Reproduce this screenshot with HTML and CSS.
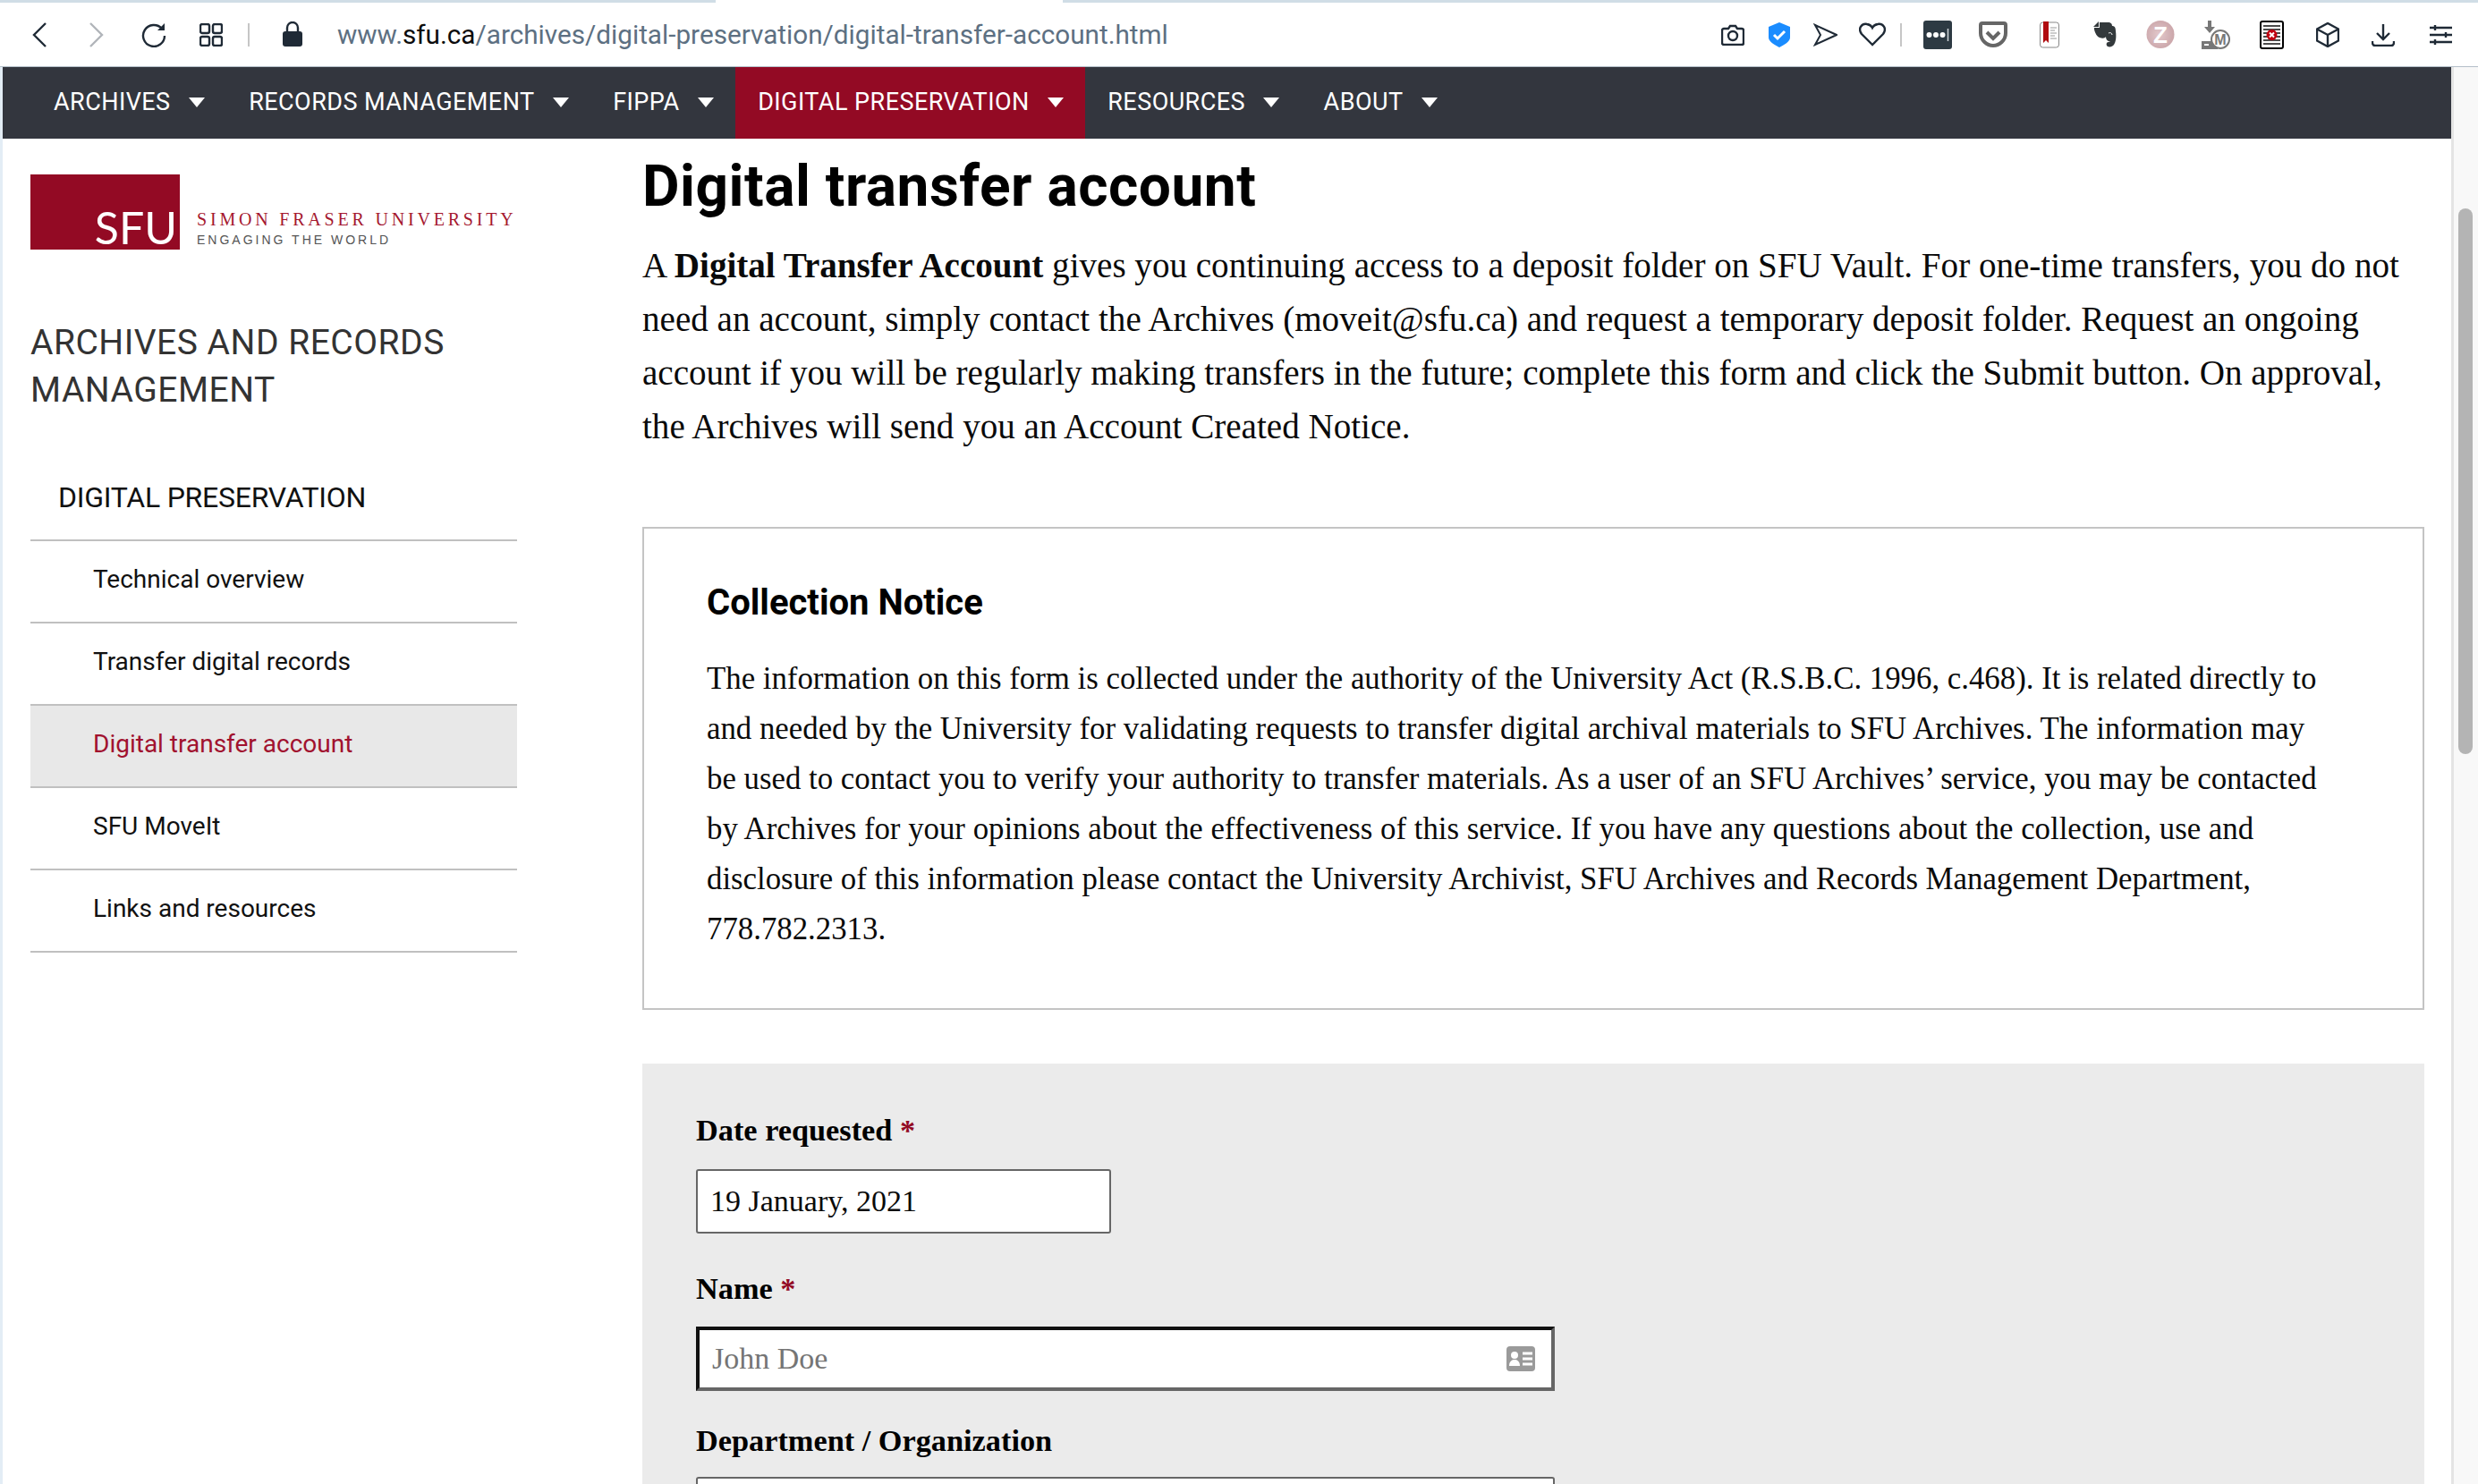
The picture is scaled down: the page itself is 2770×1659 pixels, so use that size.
FILE: index.html
```html
<!DOCTYPE html>
<html lang="en">
<head>
<meta charset="utf-8">
<title>Digital transfer account</title>
<link rel="stylesheet" href="styles.css">
</head>
<body>
<div class="window">
  <div class="tabstrip"><span class="tab-edge tab-edge-left"></span><span class="tab-active"></span><span class="tab-edge"></span></div>
  <header class="toolbar">
    <div class="tool-group tool-group-nav">
      <span class="cell cell-nav"><svg width="18" height="30" viewBox="0 0 18 30"><path d="M16 2 3 15l13 13" class="ln"/></svg></span>
      <span class="cell cell-nav"><svg width="18" height="30" viewBox="0 0 18 30"><path d="M2 2l13 13L2 28" class="ln ln-off"/></svg></span>
      <span class="cell cell-nav"><svg width="28" height="28" viewBox="0 0 28 28"><path d="M23 7A12 12 0 1 0 26 15" class="ln"/><path d="M18 9h8V1z" class="fill"/></svg></span>
      <span class="cell cell-nav"><svg width="26" height="26" viewBox="0 0 26 26"><rect x="1" y="1" width="10" height="10" rx="2" class="ln"/><rect x="15" y="1" width="10" height="10" rx="2" class="ln"/><rect x="1" y="15" width="10" height="10" rx="2" class="ln"/><rect x="15" y="15" width="10" height="10" rx="2" class="ln"/></svg></span>
    </div>
    <span class="tool-sep tool-sep-left"></span>
    <span class="lock"><svg width="22" height="28" viewBox="0 0 22 28"><path d="M5 12V7a6 6 0 0 1 12 0v5" class="ln"/><rect y="11" width="22" height="17" rx="3" class="fill"/></svg></span>
    <div class="url"><span class="url-host">www.<b class="url-domain">sfu.ca</b></span>/archives/digital-preservation/digital-transfer-account.html</div>
    <div class="tool-group">
      <span class="cell"><svg width="26" height="24" viewBox="0 0 26 24"><path d="M3 5h5l2-3h6l2 3h5a2 2 0 0 1 2 2v14a2 2 0 0 1-2 2H3a2 2 0 0 1-2-2V7a2 2 0 0 1 2-2z" class="ln"/><circle cx="13" cy="13" r="5" class="ln"/></svg></span>
      <span class="cell"><svg width="24" height="28" viewBox="0 0 24 28"><path d="M12 0 24 5v12c0 4-6 8-12 11C6 25 0 21 0 17V5z" fill="#1a8cff"/><path d="M6 14l4 4 8-8" fill="none" stroke="#fff" stroke-width="3"/></svg></span>
      <span class="cell"><svg width="27" height="26" viewBox="0 0 27 26"><path d="M2 2l24 11L2 24l6-11z" class="ln ln-thin"/></svg></span>
      <span class="cell"><svg width="30" height="27" viewBox="0 0 30 27"><path d="M15 25 3 13C-2 6 4 1 9 2c3 .5 5 2 6 4 1-2 3-3.500 6-4 5-1 11 4 6 11z" class="ln"/></svg></span>
    </div>
    <span class="tool-sep"></span>
    <div class="tool-group tool-group-ext">
      <span class="cell cell-ext"><svg width="32" height="32" viewBox="0 0 32 32"><rect width="32" height="32" rx="3" fill="#2d3a43"/><circle cx="6.500" cy="16" r="3" fill="#fff"/><circle cx="14" cy="16" r="3" fill="#fff"/><circle cx="21.500" cy="16" r="3" fill="#fff"/><path d="M27.500 9v14" stroke="#cfd4d8" stroke-width="1.500"/></svg></span>
      <span class="cell cell-ext"><svg width="32" height="29" viewBox="0 0 32 29"><path d="M4 2h24a2 2 0 0 1 2 2v9c0 8-7 14-14 14S2 21 2 13V4a2 2 0 0 1 2-2z" fill="none" stroke="#666" stroke-width="4"/><path d="M9 12l7 7 7-7" fill="none" stroke="#666" stroke-width="4"/></svg></span>
      <span class="cell cell-ext"><svg width="22" height="30" viewBox="0 0 22 30"><rect x=".5" y="1" width="21" height="28" rx="3" fill="#fff" stroke="#888"/><path d="M12 7h7M12 10h5M12 13h7M12 16h5M12 19h7" stroke="#999"/><path d="M4 0h6v24l-3-3-3 3z" fill="#b00c10"/></svg></span>
      <span class="cell cell-ext"><svg width="26" height="30" viewBox="0 0 26 30"><path d="M7 1h9c4 0 5 2 5 4 3 0 4 2 4 6 1 7 0 12-2 15-2 3-7 3-8 1-1-2 0-4 2-4h2c-2-1-5-2-5-6-1 2-4 2-7 1-3-1-5-5-6-9V7h6z" fill="#33393c"/><path d="M0 6l6-6v6z" fill="#33393c"/><path d="M17 13c2-1 4 0 4 2" fill="none" stroke="#fff"/></svg></span>
      <span class="cell cell-ext"><svg width="32" height="31" viewBox="0 0 32 31"><defs><radialGradient id="zball" cx=".45" cy=".5" r=".6"><stop offset="0" stop-color="#e2c8cb"/><stop offset="1" stop-color="#c9a3a7"/></radialGradient></defs><circle cx="16" cy="15.500" r="15.500" fill="url(#zball)"/><text x="16" y="25" class="ext-z">Z</text></svg></span>
      <span class="cell cell-ext"><svg width="32" height="32" viewBox="0 0 32 32"><path d="M7 0h4v7h4l-6 7-6-7h4z" fill="#777"/><path d="M0 23h18v9H0z" fill="#777"/><path d="M3 27h5" stroke="#fff" stroke-width="2"/><circle cx="21" cy="21" r="10" fill="#fff" stroke="#777" stroke-width="2"/><text x="21" y="27" class="ext-m">M</text></svg></span>
      <span class="cell cell-ext"><svg width="27" height="32" viewBox="0 0 27 32"><rect x="1" y="1" width="25" height="30" rx="2" fill="#fff" stroke="#000" stroke-width="2"/><path d="M4 6h19M4 10h19M4 14h19M4 18h19M4 22h19M4 26h19" stroke="#111" stroke-width="1.500"/><circle cx="13.500" cy="16" r="6" fill="#c00010"/><path d="M11 13.500l5 5M16 13.500l-5 5" stroke="#fff" stroke-width="2"/></svg></span>
      <span class="cell cell-ext"><svg width="26" height="28" viewBox="0 0 26 28"><path d="M13 1l12 6.500v13L13 27 1 20.500v-13zM1 7.500 13 14l12-6.500M13 14v13" class="ln"/></svg></span>
      <span class="cell cell-ext"><svg width="26" height="26" viewBox="0 0 26 26"><path d="M13 1v17M6 11l7 7 7-7M1 20v2a3 3 0 0 0 3 3h18a3 3 0 0 0 3-3v-2" class="ln"/></svg></span>
      <span class="cell cell-last"><svg width="25" height="22" viewBox="0 0 25 22"><path d="M0 3h25M0 11h25M0 19h25M6 0v6M18 8v6M6 16v6" class="ln"/></svg></span>
    </div>
  </header>
  <div class="viewport">
    <div class="page">
      <nav class="mainnav">
        <a class="navitem">ARCHIVES<i class="caret"></i></a>
        <a class="navitem">RECORDS MANAGEMENT<i class="caret"></i></a>
        <a class="navitem">FIPPA<i class="caret"></i></a>
        <a class="navitem navitem-active">DIGITAL PRESERVATION<i class="caret"></i></a>
        <a class="navitem">RESOURCES<i class="caret"></i></a>
        <a class="navitem">ABOUT<i class="caret"></i></a>
      </nav>
      <div class="content">
        <aside class="sidebar">
          <div class="logo">
            <div class="logo-mark">SFU</div>
            <div class="logo-text">
              <div class="logo-name">SIMON FRASER UNIVERSITY</div>
              <div class="logo-tag">ENGAGING THE WORLD</div>
            </div>
          </div>
          <h2 class="site-title">ARCHIVES AND RECORDS MANAGEMENT</h2>
          <h3 class="section-title">DIGITAL PRESERVATION</h3>
          <ul class="sidemenu">
            <li class="sideitem">Technical overview</li>
            <li class="sideitem">Transfer digital records</li>
            <li class="sideitem sideitem-active">Digital transfer account</li>
            <li class="sideitem">SFU MoveIt</li>
            <li class="sideitem">Links and resources</li>
          </ul>
        </aside>
        <main class="main">
          <h1 class="title">Digital transfer account</h1>
          <p class="intro">A <strong>Digital Transfer Account</strong> gives you continuing access to a deposit folder on SFU Vault. For one-time transfers, you do not need an account, simply contact the Archives (moveit@sfu.ca) and request a temporary deposit folder. Request an ongoing account if you will be regularly making transfers in the future; complete this form and click the Submit button. On approval, the Archives will send you an Account Created Notice.</p>
          <section class="notice">
            <h2 class="notice-title">Collection Notice</h2>
            <p class="notice-body">The information on this form is collected under the authority of the University Act (R.S.B.C. 1996, c.468). It is related directly to and needed by the University for validating requests to transfer digital archival materials to SFU Archives. The information may be used to contact you to verify your authority to transfer materials. As a user of an SFU Archives’ service, you may be contacted by Archives for your opinions about the effectiveness of this service. If you have any questions about the collection, use and disclosure of this information please contact the University Archivist, SFU Archives and Records Management Department, 778.782.2313.</p>
          </section>
          <form class="form">
            <label class="label">Date requested <span class="req">*</span></label>
            <div class="input input-short">19 January, 2021</div>
            <label class="label label-name">Name <span class="req">*</span></label>
            <div class="input input-focus"><span class="placeholder">John Doe</span>
              <svg class="card-icon" width="32" height="28" viewBox="0 0 32 28"><rect width="32" height="28" rx="4" fill="#9a9a9a"/><circle cx="9" cy="10" r="4" fill="#fff"/><path d="M3 22c0-5 3-7 6-7s6 2 6 7z" fill="#fff"/><path d="M18 8h11M18 14h11M18 20h11" stroke="#fff" stroke-width="3"/></svg>
            </div>
            <label class="label label-dept">Department / Organization</label>
            <div class="input input-wide"></div>
          </form>
        </main>
      </div>
    </div>
    <div class="scrollbar"><div class="thumb"></div></div>
  </div>
</div>
</body>
</html>
```
FILE: styles.css
```css
* { box-sizing: border-box; }
html, body { margin: 0; padding: 0; }
body { overflow: hidden; background: #fff; }
.window { width: 2770px; height: 1659px; overflow: hidden; display: flex; flex-direction: column; background: #e3edf5; }
.tabstrip { display: flex; height: 3px; flex: none; }
.tab-edge { flex: 1; background: #d0dde6; }
.tab-edge-left { flex: none; width: 800px; }
.tab-active { width: 388px; background: #fff; }
.toolbar { flex: none; height: 72px; display: flex; align-items: center; background: #fff; border-bottom: 1px solid #b4bfc9; padding: 0 9px 0 12px; }
.tool-group { display: flex; align-items: center; }
.cell { width: 52px; height: 40px; display: flex; align-items: center; justify-content: center; }
.cell-nav { width: 64px; }
.cell-ext { width: 62.250px; }
.cell-last { width: 65.800px; }
.ln { fill: none; stroke: #1f2a36; stroke-width: 2.400; }
.ln-off { stroke: #b1b5ba; }
.ln-thin { stroke-width: 2; }
.fill { fill: #1f2a36; }
.tool-sep { width: 2px; height: 26px; background: #c6c6c6; flex: none; margin: 0 9px 0 5px; }
.tool-sep-left { margin: 0 37px 0 9px; }
.lock { width: 22px; height: 28px; margin-right: 39px; flex: none; margin-top: -2px; }
.lock svg { display: block; }
.url { flex: 1; font: 29.700px/1 Roboto, sans-serif; color: #5d7082; white-space: nowrap; }
.url-host { color: #5d7082; }
.url-domain { font-weight: 400; color: #0c0c0d; }
.ext-z { font: 700 26px "Liberation Sans", sans-serif; fill: #fff; text-anchor: middle; }
.ext-m { font: 700 16px "Liberation Sans", sans-serif; fill: #777; text-anchor: middle; }

.viewport { flex: 1; min-height: 0; display: flex; margin-left: 3px; background: #fff; }
.page { flex: 1; min-width: 0; }
.scrollbar { flex: none; width: 30px; background: #f8f8f8; border-left: 3px solid #e4e4e4; padding: 158px 0 0 5px; }
.thumb { width: 16px; height: 610px; border-radius: 8px; background: #b4b4b4; }

.mainnav { height: 80px; background: #33363e; display: flex; padding-left: 32px; }
.navitem { display: flex; align-items: center; padding: 0 24.800px 2px; color: #fff; font: 400 27px/1 Roboto, sans-serif; letter-spacing: .45px; white-space: nowrap; }
.navitem:first-child { padding-left: 25px; }
.navitem-active { background: #930a24; }
.caret { width: 0; height: 0; margin-left: 20px; border-left: 9px solid transparent; border-right: 9px solid transparent; border-top: 11px solid #fff; }

.content { display: flex; padding-right: 30px; }
.sidebar { flex: none; width: 544px; margin-left: 31px; padding-top: 40px; }
.logo { display: flex; align-items: flex-end; height: 84px; }
.logo-mark { width: 167px; height: 84px; background: #930a24; color: #fff; font: 400 50px/1 Lato, sans-serif; display: flex; align-items: flex-end; justify-content: flex-end; padding-right: 3px; }
.logo-text { margin-left: 19px; }
.logo-name { font: 400 20px/24px "Liberation Serif", serif; letter-spacing: 3.800px; color: #a5182f; white-space: nowrap; }
.logo-tag { font: 400 14px/22px "Liberation Sans", sans-serif; letter-spacing: 3px; color: #555; white-space: nowrap; }
.site-title { margin: 78px 0 0; font: 400 39px/53px Roboto, sans-serif; letter-spacing: .5px; color: #333; }
.section-title { margin: 73px 0 0; padding: 0 0 25px 31px; font: 400 32px/40px Roboto, sans-serif; letter-spacing: -.25px; color: #111; border-bottom: 2px solid #c0c0c0; height: 69px; }
.sidemenu { list-style: none; margin: 0; padding: 0; }
.sideitem { height: 92px; padding: 23px 0 0 70px; font: 400 28px/40px Roboto, sans-serif; color: #111; border-bottom: 2px solid #c0c0c0; }
.sideitem-active { background: #e8e8e8; color: #a1122f; }

.main { flex: 1; min-width: 0; margin-left: 140px; }
.title { margin: 19px 0 0; font: 700 64px/70px Roboto, sans-serif; color: #000; letter-spacing: .5px; }
.intro { margin: 23px 0 0; font: 400 39.100px/60px "Liberation Serif", serif; color: #0a0a0a; }
.notice { margin-top: 82px; height: 540px; border: 2px solid #c4c4c4; padding: 53px 98px 0 70px; }
.notice-title { margin: 0; font: 700 40px/60px Roboto, sans-serif; color: #000; }
.notice-body { margin: 27px 0 0; font: 400 34.800px/56px "Liberation Serif", serif; color: #0a0a0a; }
.form { margin-top: 60px; height: 600px; background: #ebebeb; padding: 50px 60px 0; }
.label { display: block; font: 700 34.300px/48px "Liberation Serif", serif; color: #000; }
.req { color: #930a24; }
.label-name { margin-top: 37px; }
.label-dept { margin-top: 31px; }
.input { display: flex; align-items: center; justify-content: space-between; height: 72px; background: #fff; border: 2px solid #666; border-radius: 3px; padding: 0 14px; font: 400 34px/1 "Liberation Serif", serif; color: #0a0a0a; }
.input-short { width: 464px; margin-top: 20px; }
.input-focus { width: 960px; margin-top: 19px; border: 4px inset #666; border-radius: 0; padding-right: 18px; }
.input-wide { width: 960px; margin-top: 17px; }
.placeholder { color: #757575; }
```
